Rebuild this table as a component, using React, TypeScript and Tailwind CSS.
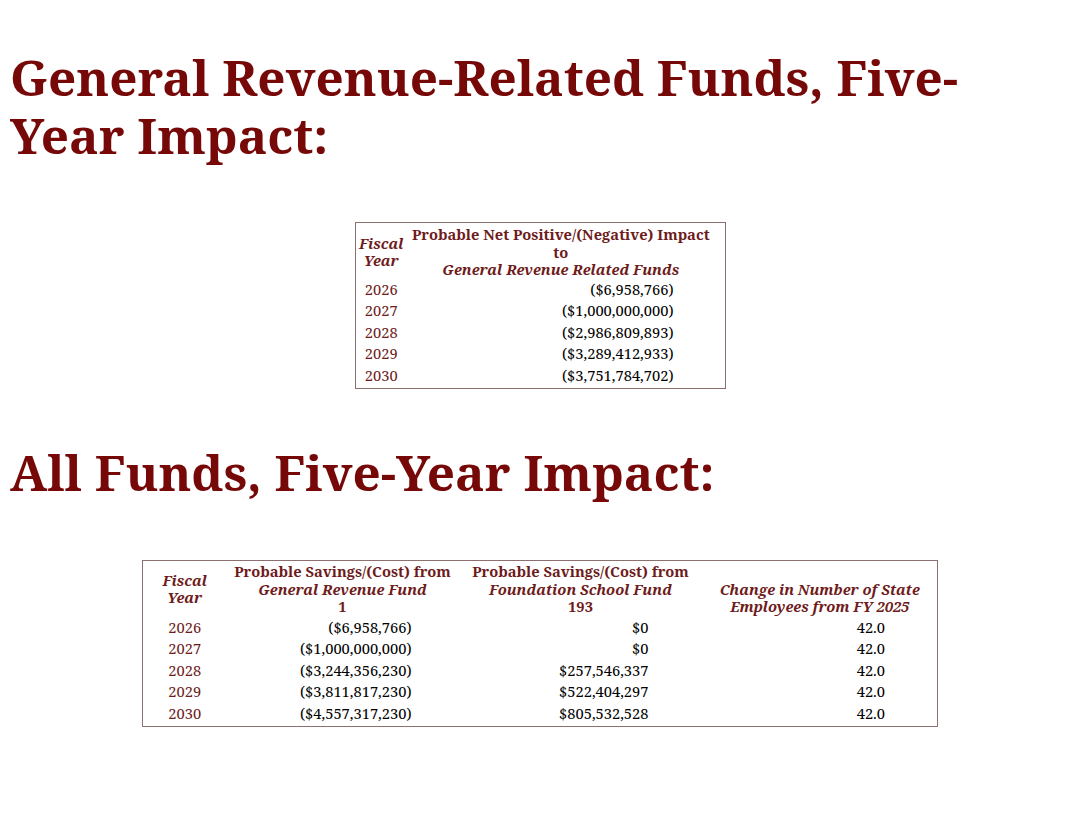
const serif = "font-['Noto_Serif','DejaVu_Serif','Liberation_Serif',serif]";

const gr = [
  ["2026", "($6,958,766)"],
  ["2027", "($1,000,000,000)"],
  ["2028", "($2,986,809,893)"],
  ["2029", "($3,289,412,933)"],
  ["2030", "($3,751,784,702)"],
];

const all = [
  ["2026", "($6,958,766)", "$0", "42.0"],
  ["2027", "($1,000,000,000)", "$0", "42.0"],
  ["2028", "($3,244,356,230)", "$257,546,337", "42.0"],
  ["2029", "($3,811,817,230)", "$522,404,297", "42.0"],
  ["2030", "($4,557,317,230)", "$805,532,528", "42.0"],
];

export default function App() {
  return (
    <div className={`${serif} min-h-[818px] bg-white px-[10px] pt-[48px]`}>
      <h1 className="text-[49.4px] font-bold leading-[58px] text-[#760808]">
        General Revenue-Related Funds, Five-Year Impact:
      </h1>
      <div className="mt-[58px] flex justify-center">
        <table className="w-[371px] border border-[#8c6f6f] text-[14.7px]">
          <thead className="text-[#6e1b1b]">
            <tr className="leading-[17.5px]">
              <th className="w-[50px] pl-[2px] pt-[3px] align-middle italic">Fiscal Year</th>
              <th className="pr-[8px] pt-[3px] pb-0">
                Probable Net Positive/(Negative) Impact
                <br />
                to
                <br />
                <i>General Revenue Related Funds</i>
              </th>
            </tr>
          </thead>
          <tbody className="leading-[21.5px]">
            {gr.map(([y, v], i) => (
              <tr key={y}>
                <td className={`p-0 pl-[2px] text-center text-[#6e1b1b] ${i === 4 ? "pb-[2px]" : ""}`}>{y}</td>
                <td className={`p-0 pr-[51px] text-right text-black ${i === 4 ? "pb-[2px]" : ""}`}>{v}</td>
              </tr>
            ))}
          </tbody>
        </table>
      </div>
      <h2 className="mt-[54px] text-[49.4px] font-bold leading-[58px] text-[#760808]">
        All Funds, Five-Year Impact:
      </h2>
      <div className="mt-[59px] flex justify-center">
        <table className="w-[796px] border border-[#8c6f6f] text-[14.7px]">
          <thead className="text-[#6e1b1b]">
            <tr className="leading-[17.5px]">
              <th className="w-[84px] px-1 pt-[2px] pb-[1px] align-middle italic">Fiscal Year</th>
              <th className="w-[232px] px-1 pt-[2px] pb-[1px]">
                Probable Savings/(Cost) from
                <br />
                <i>General Revenue Fund</i>
                <br />1
              </th>
              <th className="w-[244px] px-1 pt-[2px] pb-[1px]">
                Probable Savings/(Cost) from
                <br />
                <i>Foundation School Fund</i>
                <br />
                193
              </th>
              <th className="px-1 pt-[2px] pb-[1px] align-bottom italic">
                Change in Number of State Employees from FY 2025
              </th>
            </tr>
          </thead>
          <tbody className="leading-[21.5px]">
            {all.map(([y, a, b, c], i) => (
              <tr key={y}>
                <td className={`p-0 text-center text-[#6e1b1b] ${i === 4 ? "pb-[2px]" : ""}`}>{y}</td>
                <td className={`p-0 pr-[47px] text-right text-black ${i === 4 ? "pb-[2px]" : ""}`}>{a}</td>
                <td className={`p-0 pr-[54px] text-right text-black ${i === 4 ? "pb-[2px]" : ""}`}>{b}</td>
                <td className={`p-0 pr-[52px] text-right text-black ${i === 4 ? "pb-[2px]" : ""}`}>{c}</td>
              </tr>
            ))}
          </tbody>
        </table>
      </div>
    </div>
  );
}
